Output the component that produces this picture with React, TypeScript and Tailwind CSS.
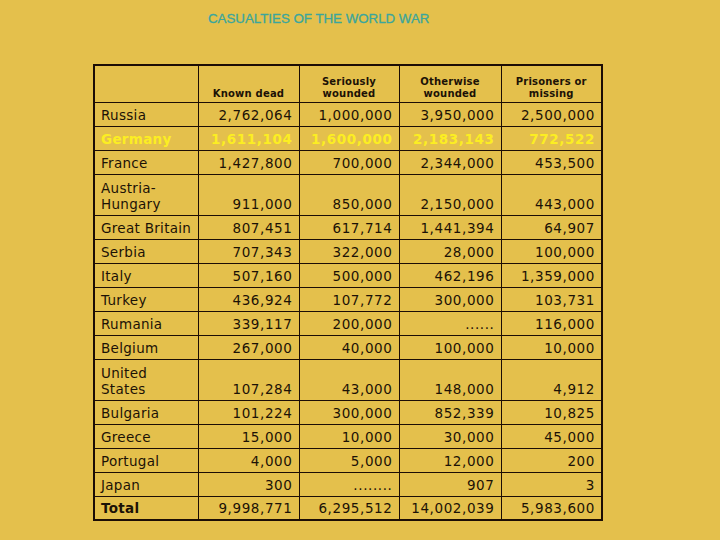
import React from "react";

type Row = {
  country: string[];
  values: string[];
  highlight?: boolean;
  bold?: boolean;
};

const rows: Row[] = [
  { country: ["Russia"], values: ["2,762,064", "1,000,000", "3,950,000", "2,500,000"] },
  { country: ["Germany"], values: ["1,611,104", "1,600,000", "2,183,143", "772,522"], highlight: true },
  { country: ["France"], values: ["1,427,800", "700,000", "2,344,000", "453,500"] },
  { country: ["Austria-", "Hungary"], values: ["911,000", "850,000", "2,150,000", "443,000"] },
  { country: ["Great Britain"], values: ["807,451", "617,714", "1,441,394", "64,907"] },
  { country: ["Serbia"], values: ["707,343", "322,000", "28,000", "100,000"] },
  { country: ["Italy"], values: ["507,160", "500,000", "462,196", "1,359,000"] },
  { country: ["Turkey"], values: ["436,924", "107,772", "300,000", "103,731"] },
  { country: ["Rumania"], values: ["339,117", "200,000", "......", "116,000"] },
  { country: ["Belgium"], values: ["267,000", "40,000", "100,000", "10,000"] },
  { country: ["United", "States"], values: ["107,284", "43,000", "148,000", "4,912"] },
  { country: ["Bulgaria"], values: ["101,224", "300,000", "852,339", "10,825"] },
  { country: ["Greece"], values: ["15,000", "10,000", "30,000", "45,000"] },
  { country: ["Portugal"], values: ["4,000", "5,000", "12,000", "200"] },
  { country: ["Japan"], values: ["300", "........", "907", "3"] },
  { country: ["Total"], values: ["9,998,771", "6,295,512", "14,002,039", "5,983,600"], bold: true },
];

const headers = [["Known dead"], ["Seriously", "wounded"], ["Otherwise", "wounded"], ["Prisoners or", "missing"]];

const widths = ["w-[104px]", "w-[101px]", "w-[100px]", "w-[102px]", "w-[101px]"];

export default function App() {
  return (
    <div className="w-[720px] h-[540px] bg-[#e4c04c] overflow-hidden font-['DejaVu_Sans',sans-serif] text-[#1c1206]">
      <h1 className="pt-[11px] pl-[208px] text-[13.3px] leading-[16px] font-['Liberation_Sans',sans-serif] text-[#3ba69c] [-webkit-text-stroke:0.3px_#3ba69c]">
        CASUALTIES OF THE WORLD WAR
      </h1>
      <div className="pl-[93px] pt-[37px]">
        <table className="border-collapse border-2 border-[#1c0d05] table-fixed">
          <thead>
            <tr className="h-[37px]">
              <th className={`${widths[0]} border border-[#1c0d05]`}></th>
              {headers.map((h, i) => (
                <th
                  key={i}
                  className={`${widths[i + 1]} border border-[#1c0d05] align-bottom pb-[2px] text-[10px] leading-[12px] font-bold text-center tracking-[0.2px]`}
                >
                  {h.map((line) => (
                    <div key={line}>{line}</div>
                  ))}
                </th>
              ))}
            </tr>
          </thead>
          <tbody>
            {rows.map((r) => (
              <tr
                key={r.country.join("")}
                className={`${r.country.length > 1 ? "h-[41px]" : "h-[24px]"} ${
                  r.highlight ? "text-[#fcee22] font-bold" : ""
                }`}
              >
                <td
                  className={`border border-[#1c0d05] align-bottom pl-[6px] pb-[3px] text-[13.5px] leading-[16px] tracking-[0.3px] ${
                    r.bold ? "font-bold" : ""
                  }`}
                >
                  {r.country.map((c) => (
                    <div key={c}>{c}</div>
                  ))}
                </td>
                {r.values.map((v, i) => (
                  <td
                    key={i}
                    className="border border-[#1c0d05] align-bottom text-right pr-[6px] pb-[3px] text-[13.5px] leading-[16px] tracking-[0.6px]"
                  >
                    {v}
                  </td>
                ))}
              </tr>
            ))}
          </tbody>
        </table>
      </div>
    </div>
  );
}
